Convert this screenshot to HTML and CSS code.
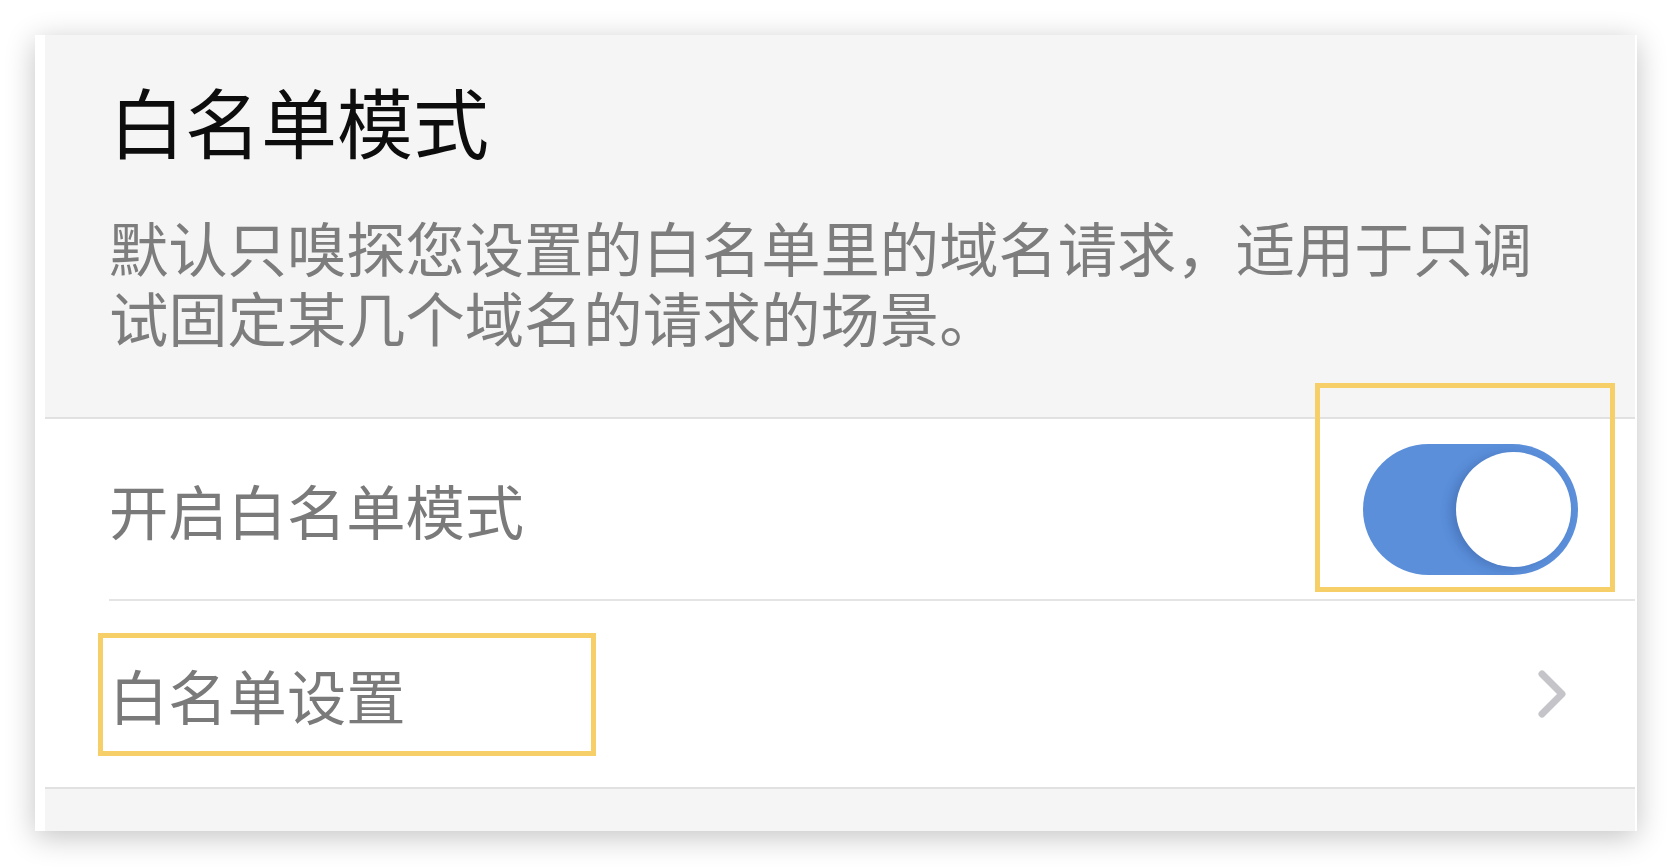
FILE: index.html
```html
<!DOCTYPE html>
<html lang="zh-CN">
<head>
<meta charset="utf-8">
<title>白名单模式</title>
<link rel="stylesheet" href="styles.css">
</head>
<body>
<div class="shot">
  <div class="screen">
    <header class="intro">
      <h1 class="title">白名单模式</h1>
      <p class="desc">默认只嗅探您设置的白名单里的域名请求，适用于只调试固定某几个域名的请求的场景。</p>
    </header>
    <ul class="list">
      <li class="row">
        <span class="label">开启白名单模式</span>
        <span class="toggle-wrap">
          <span class="toggle"><span class="knob"></span></span>
          <span class="mark mark-toggle"></span>
        </span>
      </li>
      <li class="row row-link">
        <span class="label label-marked">白名单设置<span class="mark mark-label"></span></span>
        <svg class="chevron" width="30" height="50" viewBox="0 0 30 50" aria-hidden="true">
          <path d="M5 5 L25 25 L5 45" fill="none" stroke="#c5c5c9" stroke-width="7" stroke-linecap="round" stroke-linejoin="round"/>
        </svg>
      </li>
    </ul>
    <div class="footer-space"></div>
  </div>
</div>
</body>
</html>
```
FILE: styles.css
```css
html, body {
  margin: 0;
  padding: 0;
  background: #ffffff;
}

body {
  font-family: "Noto Sans CJK SC", "Noto Sans", sans-serif;
  padding: 35px 0 0 35px;
  height: 868px;
  box-sizing: border-box;
  overflow: hidden;
}

.shot {
  width: 1602px;
  height: 796px;
  background: #ffffff;
  box-shadow: 0 6px 28px rgba(0, 0, 0, 0.24);
  padding: 0 2px 0 10px;
  box-sizing: border-box;
}

.screen {
  height: 100%;
  display: flex;
  flex-direction: column;
  background: #f5f5f5;
}

.intro {
  background: #f5f5f5;
  padding: 40px 72px 66px 64px;
  border-bottom: 2px solid #e1e1e1;
}

.title {
  margin: 0;
  font-size: 76px;
  line-height: 90px;
  font-weight: 400;
  color: #0d0d0d;
}

.desc {
  margin: 46px 0 0 0;
  font-size: 59.3px;
  line-height: 70px;
  color: #7d7d7d;
}

.list {
  list-style: none;
  margin: 0;
  padding: 0 0 0 64px;
  background: #ffffff;
  border-bottom: 2px solid #e1e1e1;
}

.row {
  display: flex;
  align-items: center;
  justify-content: space-between;
  height: 180px;
  padding-right: 57px;
  box-sizing: border-box;
}

.row + .row {
  border-top: 2px solid #e4e4e4;
  height: 188px;
  padding-right: 68px;
}

.label {
  font-size: 59.3px;
  line-height: 71px;
  color: #7a7a7a;
}

.label-marked {
  position: relative;
}

.toggle-wrap {
  position: relative;
  display: block;
}

.toggle {
  display: block;
  width: 215px;
  height: 131px;
  border-radius: 66px;
  background: #5b8fda;
  position: relative;
}

.knob {
  position: absolute;
  right: 7px;
  top: 8px;
  width: 115px;
  height: 115px;
  border-radius: 50%;
  background: #ffffff;
  box-shadow: -6px 2px 10px rgba(30, 60, 120, 0.25);
}

.mark {
  position: absolute;
  border: 5px solid #f7cf69;
  box-sizing: border-box;
}

.mark-toggle {
  left: -48px;
  right: -37px;
  top: -61px;
  bottom: -17px;
}

.mark-label {
  left: -11px;
  right: -191px;
  top: -26px;
  bottom: -26px;
}

.chevron {
  display: block;
}

.footer-space {
  flex: 1;
  background: #f5f5f5;
}
```
